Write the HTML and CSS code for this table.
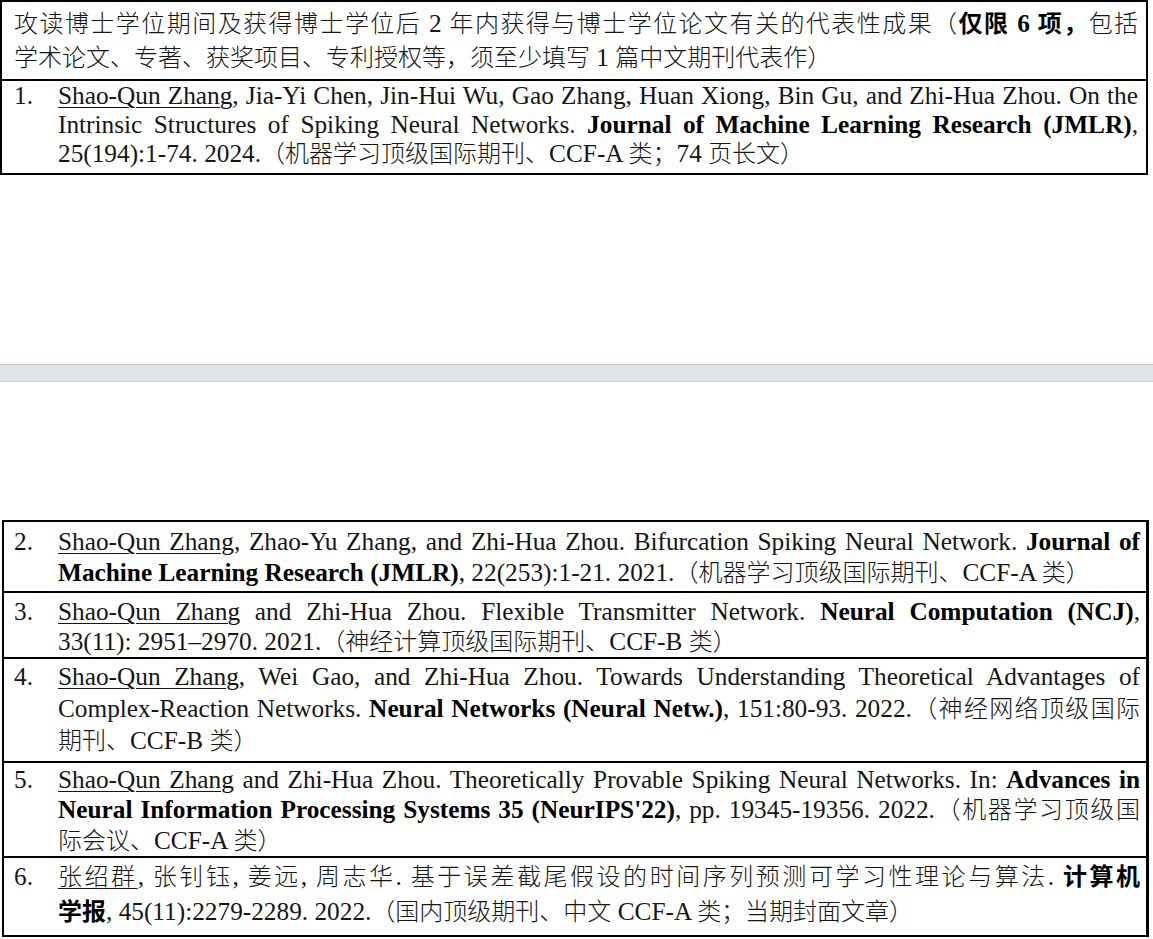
FILE: index.html
```html
<!DOCTYPE html>
<html lang="zh-CN">
<head>
<meta charset="utf-8">
<title>代表性成果</title>
<link rel="stylesheet" href="styles.css">
</head>
<body>
<div class="viewer">
  <section class="page page-top">
    <div class="tbl tbl-1">
      <div class="row head">
        <div class="lines">
          <span class="ln"><span class="zh">攻读博士学位期间及获得博士学位后</span> 2 <span class="zh">年内获得与博士学位论文有关的代表性成果（</span><b><span class="zh">仅限</span> 6 <span class="zh">项，</span></b><span class="zh">包括</span></span>
          <span class="ln last"><span class="zh">学术论文、专著、获奖项目、专利授权等，须至少填写</span> 1 <span class="zh">篇中文期刊代表作）</span></span>
        </div>
      </div>
      <div class="row item r1">
        <span class="num">1.</span>
        <div class="lines">
          <span class="ln"><u>Shao-Qun Zhang</u>, Jia-Yi Chen, Jin-Hui Wu, Gao Zhang, Huan Xiong, Bin Gu, and Zhi-Hua Zhou. On the</span>
          <span class="ln">Intrinsic Structures of Spiking Neural Networks. <b>Journal of Machine Learning Research (JMLR)</b>,</span>
          <span class="ln last">25(194):1-74. 2024.<span class="zh">（机器学习顶级国际期刊、</span>CCF-A <span class="zh">类；</span>74 <span class="zh">页长文）</span></span>
        </div>
      </div>
    </div>
  </section>
  <div class="page-gap"></div>
  <section class="page page-bottom">
    <div class="tbl tbl-2">
      <div class="row item r2">
        <span class="num">2.</span>
        <div class="lines">
          <span class="ln"><u>Shao-Qun Zhang</u>, Zhao-Yu Zhang, and Zhi-Hua Zhou. Bifurcation Spiking Neural Network. <b>Journal of</b></span>
          <span class="ln last"><b>Machine Learning Research (JMLR)</b>, 22(253):1-21. 2021.<span class="zh">（机器学习顶级国际期刊、</span>CCF-A <span class="zh">类）</span></span>
        </div>
      </div>
      <div class="row item r3">
        <span class="num">3.</span>
        <div class="lines">
          <span class="ln"><u>Shao-Qun Zhang</u> and Zhi-Hua Zhou. Flexible Transmitter Network. <b>Neural Computation (NCJ)</b>,</span>
          <span class="ln last">33(11): 2951–2970. 2021.<span class="zh">（神经计算顶级国际期刊、</span>CCF-B <span class="zh">类）</span></span>
        </div>
      </div>
      <div class="row item r4">
        <span class="num">4.</span>
        <div class="lines">
          <span class="ln"><u>Shao-Qun Zhang</u>, Wei Gao, and Zhi-Hua Zhou. Towards Understanding Theoretical Advantages of</span>
          <span class="ln">Complex-Reaction Networks. <b>Neural Networks (Neural Netw.)</b>, 151:80-93. 2022.<span class="zh">（神经网络顶级国际</span></span>
          <span class="ln last"><span class="zh">期刊、</span>CCF-B <span class="zh">类）</span></span>
        </div>
      </div>
      <div class="row item r5">
        <span class="num">5.</span>
        <div class="lines">
          <span class="ln"><u>Shao-Qun Zhang</u> and Zhi-Hua Zhou. Theoretically Provable Spiking Neural Networks. In: <b>Advances in</b></span>
          <span class="ln"><b>Neural Information Processing Systems 35 (NeurIPS'22)</b>, pp. 19345-19356. 2022.<span class="zh">（机器学习顶级国</span></span>
          <span class="ln last"><span class="zh">际会议、</span>CCF-A <span class="zh">类）</span></span>
        </div>
      </div>
      <div class="row item r6">
        <span class="num">6.</span>
        <div class="lines">
          <span class="ln"><u class="zh">张绍群</u>, <span class="zh">张钊钰</span>, <span class="zh">姜远</span>, <span class="zh">周志华</span>. <span class="zh">基于误差截尾假设的时间序列预测可学习性理论与算法</span>. <b class="zh">计算机</b></span>
          <span class="ln last"><b class="zh">学报</b>, 45(11):2279-2289. 2022.<span class="zh">（国内顶级期刊、中文</span> CCF-A <span class="zh">类；当期封面文章）</span></span>
        </div>
      </div>
    </div>
  </section>
</div>
</body>
</html>
```
FILE: styles.css
```css
html, body {
  margin: 0;
  padding: 0;
  background: #ffffff;
}

body {
  font-family: "Liberation Serif", "Noto Sans CJK SC", serif;
  font-size: 25.3px;
  font-weight: 300;
  color: #151515;
  overflow: hidden;
  height: 939px;
}

.zh {
  font-size: 24px;
}

b {
  font-weight: 700;
  color: #000;
}

u {
  text-decoration: underline;
  text-decoration-thickness: 1px;
  text-underline-offset: 3px;
}

.viewer {
  display: flex;
  flex-direction: column;
}

.page {
  background: #fff;
}

.page-top {
  height: 364px;
}

.page-gap {
  height: 16px;
  background: #e1e4eb;
  border-top: 1px solid #c6c8ce;
  border-bottom: 1px solid #d7d9de;
}

.page-bottom {
  padding-top: 138px;
}

.tbl {
  border: 2px solid #000;
  border-bottom: none;
}

.tbl-1 {
  width: 1144px;
  margin-left: 0;
}

.tbl-2 {
  width: 1142px;
  margin-left: 2px;
  border-right-width: 3px;
}

.row {
  display: flex;
  border-bottom: 2px solid #000;
  padding-left: 12px;
  padding-right: 8px;
}

.tbl-2 .row {
  padding-left: 10px;
  padding-right: 6px;
}

.num {
  flex: 0 0 44px;
  white-space: nowrap;
}

.lines {
  flex: 1 1 auto;
  min-width: 0;
}

.ln {
  display: block;
  text-align: justify;
  text-align-last: justify;
  white-space: nowrap;
}

.ln.last {
  text-align-last: left;
}

.head {
  line-height: 33px;
  padding-top: 5px;
  padding-bottom: 4px;
}

.r1 {
  line-height: 29px;
  padding-top: 0;
  padding-bottom: 4px;
}

.r2 {
  line-height: 31px;
  padding-top: 4px;
  padding-bottom: 2px;
}

.r3 {
  line-height: 30px;
  padding-top: 3px;
  padding-bottom: 0;
}

.r4 {
  line-height: 31.5px;
  padding-top: 2px;
  padding-bottom: 3.5px;
}

.r5 {
  line-height: 30px;
  padding-top: 1px;
  padding-bottom: 0;
}

.r6 {
  line-height: 34px;
  padding-top: 1px;
  padding-bottom: 6px;
}
```
